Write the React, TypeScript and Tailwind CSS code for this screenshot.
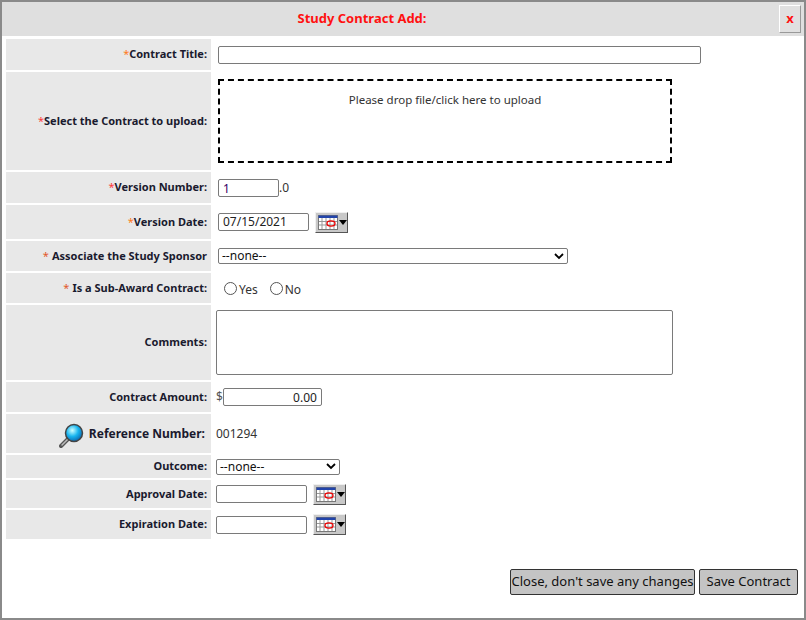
import React from "react";

const lab = "bg-[#e8e8e8] flex items-center justify-end pr-[4px] text-[11px] font-bold text-[#1a1a2e] whitespace-nowrap";
const val = "flex items-center pl-[7px]";
const inp = "h-[18px] border border-[#7a7a7a] rounded-[2px] bg-white text-[12px] px-[4px] font-['Liberation_Sans',Arial,sans-serif] text-[#222]";

function Star({ c = "text-[#ff3b3b]" }: { c?: string }) {
  return <span className={`${c} font-normal`}>*</span>;
}

function Cal() {
  return (
    <div className="ml-[6px] w-[33px] h-[21px] bg-[#c8c8c8] border border-[#f0f0f0] border-r-[#555] border-b-[#555] flex items-center pl-[2px] gap-[1px]">
      <svg width="20" height="15" viewBox="0 0 20 15">
        <rect x="0.5" y="0.5" width="19" height="14" fill="#fff" stroke="#777" />
        <rect x="0.5" y="0.5" width="19" height="2.5" fill="#2244aa" />
        {[4, 8, 12, 16].map((x) => <line key={x} x1={x} y1="3" x2={x} y2="14" stroke="#999" />)}
        {[6.5, 10].map((y) => <line key={y} x1="1" y1={y} x2="19" y2={y} stroke="#999" />)}
        <ellipse cx="13" cy="8.5" rx="4" ry="2.6" fill="none" stroke="#e00" strokeWidth="1.3" />
      </svg>
      <svg width="8" height="5" viewBox="0 0 8 5"><path d="M0 0h8L4 5z" fill="#000" /></svg>
    </div>
  );
}

function Sel({ w }: { w: string }) {
  return (
    <div className={`${w} h-[16px] border border-[#7a7a7a] rounded-[2px] bg-white flex items-center justify-between px-[3px] text-[12px] text-[#111] font-['Liberation_Sans',Arial,sans-serif]`}>
      <span>--none--</span>
      <svg width="10" height="7" viewBox="0 0 10 7"><path d="M1 1l4 4 4-4" fill="none" stroke="#000" strokeWidth="1.8" /></svg>
    </div>
  );
}

function Radio({ label }: { label: string }) {
  return (
    <span className="flex items-center gap-[2px] mr-[12px] text-[12px] text-[#333] font-['Liberation_Sans',Arial,sans-serif]">
      <span className="w-[13px] h-[13px] rounded-full border border-[#555] bg-white inline-block" />
      <span className="mt-[3px]">{label}</span>
    </span>
  );
}

export default function App() {
  return (
    <div className="w-[806px] h-[620px] bg-white border-2 border-[#8a8a8a] font-['DejaVu_Sans',Verdana,sans-serif] relative">
      <div className="h-[34px] bg-[#dfdfdf] flex items-center justify-center relative">
        <span className="text-[13px] font-bold text-[#ff1111] ml-[-82px]">Study Contract Add:</span>
        <div className="absolute right-[3px] top-[3px] w-[22px] h-[28px] bg-[#e0e0e0] border border-[#fff] border-r-[#999] border-b-[#999] flex items-center justify-center text-[13px] font-bold text-[#ff1111]">x</div>
      </div>
      <div className="pl-[4px] pt-[3px] grid grid-cols-[205px_1fr] gap-y-[2px] w-[797px]">
        <div className={`${lab} h-[31px]`}><Star c="text-[#ff7a1a]" />Contract Title:</div>
        <div className={val}><div className={`${inp} w-[483px]`} /></div>

        <div className={`${lab} h-[98px]`}><Star />Select the Contract to upload:</div>
        <div className={val}>
          <div className="w-[454px] h-[84px] border-2 border-dashed border-black flex justify-center pt-[10px] text-[12px] text-[#333] font-['DejaVu_Sans',Verdana,sans-serif]">
            <span className="text-[11.5px]">Please drop file/click here to upload</span>
          </div>
        </div>

        <div className={`${lab} h-[31px]`}><Star />Version Number:</div>
        <div className={val}>
          <div className={`${inp} w-[61px] text-[#330066]`}>1</div>
          <span className="text-[12px] text-[#333] font-['Liberation_Sans',Arial,sans-serif]">.0</span>
        </div>

        <div className={`${lab} h-[34px]`}><Star c="text-[#ff7a1a]" />Version Date:</div>
        <div className={val}>
          <div className={`${inp} w-[91px] leading-[16px]`}>07/15/2021</div>
          <Cal />
        </div>

        <div className={`${lab} h-[30px]`}><Star c="text-[#e2572b]" /><span className="ml-[3px]">Associate the Study Sponsor</span></div>
        <div className={val}><Sel w="w-[350px]" /></div>

        <div className={`${lab} h-[30px]`}><Star c="text-[#e2572b]" /><span className="ml-[3px]">Is a Sub-Award Contract:</span></div>
        <div className={`${val} pl-[13px]`}><Radio label="Yes" /><Radio label="No" /></div>

        <div className={`${lab} h-[75px]`}>Comments:</div>
        <div className="flex items-center pl-[5px]"><div className="w-[457px] h-[65px] border border-[#7a7a7a] rounded-[2px] bg-white" /></div>

        <div className={`${lab} h-[30px]`}>Contract Amount:</div>
        <div className="flex items-center pl-[5px]">
          <span className="text-[12px] text-[#555] font-['Liberation_Sans',Arial,sans-serif]">$</span>
          <div className={`${inp} w-[99px] text-right`}>0.00</div>
        </div>

        <div className={`${lab} h-[39px] pr-[6px] text-[12px]`}>
          <svg width="26" height="26" viewBox="0 0 26 26" className="mr-[4px] mt-[4px]">
            <defs>
              <radialGradient id="g" cx="0.4" cy="0.35" r="0.7">
                <stop offset="0" stopColor="#cfffff" />
                <stop offset="0.5" stopColor="#19b6f0" />
                <stop offset="1" stopColor="#0a5fa8" />
              </radialGradient>
            </defs>
            <path d="M9 16 L2 23" stroke="#555" strokeWidth="4" strokeLinecap="round" />
            <path d="M9 16 L3 22" stroke="#bbb" strokeWidth="1.5" strokeLinecap="round" />
            <circle cx="15" cy="10" r="8.5" fill="url(#g)" stroke="#444" strokeWidth="1.5" />
          </svg>
          Reference Number:
        </div>
        <div className="flex items-center pl-[5px] text-[12px] text-[#333]">001294</div>

        <div className={`${lab} h-[23px]`}>Outcome:</div>
        <div className="flex items-center pl-[5px]"><Sel w="w-[124px]" /></div>

        <div className={`${lab} h-[28px]`}>Approval Date:</div>
        <div className="flex items-center pl-[5px]"><div className={`${inp} w-[91px]`} /><Cal /></div>

        <div className={`${lab} h-[29px]`}>Expiration Date:</div>
        <div className="flex items-center pl-[5px]"><div className={`${inp} w-[91px]`} /><Cal /></div>
      </div>
      <div className="absolute right-[6px] top-[567px] flex gap-[4px] font-['Liberation_Sans',Arial,sans-serif] text-[13px] text-[#111]">
        <div className="h-[26px] w-[185px] bg-[#c4c4c4] border border-[#333] rounded-[2px] flex items-center justify-center">Close, don't save any changes</div>
        <div className="h-[26px] w-[99px] bg-[#c4c4c4] border border-[#333] rounded-[2px] flex items-center justify-center">Save Contract</div>
      </div>
    </div>
  );
}
